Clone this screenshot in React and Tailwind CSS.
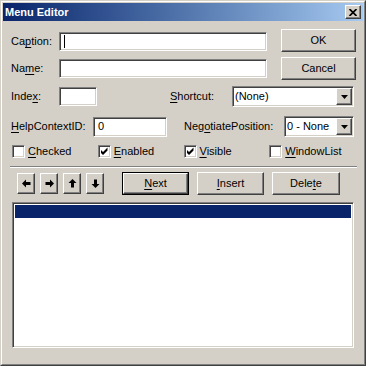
const sunken = 'border border-t-[#808080] border-l-[#808080] border-b-white border-r-white shadow-[inset_1px_1px_0_#404040,inset_-1px_-1px_0_#d4d0c8] bg-white';
const raised = 'border border-t-white border-l-white border-b-[#404040] border-r-[#404040] shadow-[inset_-1px_-1px_0_#808080,inset_1px_1px_0_#d4d0c8] bg-[#d4d0c8]';

function U({ children }) {
  return <span className="underline underline-offset-[2px]">{children}</span>;
}

function Btn({ children, w, def }) {
  const inner = (
    <div className={`${raised} flex items-center justify-center w-full h-full`}>{children}</div>
  );
  if (def) {
    return <div className={`${w} h-[23px] border border-black flex`}>{inner}</div>;
  }
  return <div className={`${w} h-[23px] flex`}>{inner}</div>;
}

function Combo({ w, value }) {
  return (
    <div className={`${sunken} ${w} h-[21px] flex items-center justify-between pl-[2px] pr-[1px]`}>
      <span>{value}</span>
      <div className={`${raised} w-[16px] h-[17px] flex items-center justify-center`}>
        <svg width="7" height="4" viewBox="0 0 7 4">
          <path d="M0 0 H7 L3.5 4 Z" fill="#000" />
        </svg>
      </div>
    </div>
  );
}

function Check({ checked, label }) {
  return (
    <div className="flex items-center w-[87px] h-[13px]">
      <div className={`${sunken} w-[13px] h-[13px] shrink-0 relative`}>
        {checked && (
          <svg className="absolute left-[-1px] top-[-1px]" width="13" height="13" viewBox="0 0 13 13">
            <path d="M3 5 L5 7 L9.5 2.5 L9.5 5.5 L5 10 L3 8 Z" fill="#000" />
          </svg>
        )}
      </div>
      <span className="ml-[3px]">{label}</span>
    </div>
  );
}

function Arrow({ dir }) {
  const rot = { left: 'rotate-0', right: 'rotate-180', up: 'rotate-90', down: '-rotate-90' }[dir];
  return (
    <div className={`${raised} w-[18px] h-[21px] flex items-center justify-center`}>
      <svg className={rot} width="9" height="9" viewBox="0 0 9 9">
        <path d="M0 4.5 L4 0.5 L4 3 L8.5 3 L8.5 6 L4 6 L4 8.5 Z" fill="#000" />
      </svg>
    </div>
  );
}

export default function App() {
  return (
    <div className="w-[366px] h-[366px] bg-[#d4d0c8] border border-t-[#d4d0c8] border-l-[#d4d0c8] border-r-[#404040] border-b-[#404040] font-['Liberation_Sans',Arial,sans-serif] text-[11px] text-black leading-none">
      <div className="w-full h-full border border-t-white border-l-white border-r-[#808080] border-b-[#808080] p-[1px] flex flex-col">
        <div className="h-[18px] bg-gradient-to-r from-[#0a246a] to-[#a6caf0] flex items-center pl-[2px] pr-[2px]">
          <span className="text-white font-bold text-[11px]">Menu Editor</span>
          <div className={`${raised} ml-auto w-[16px] h-[14px] flex items-center justify-center`}>
            <svg width="8" height="7" viewBox="0 0 8 7">
              <path d="M0.5 0 L7.5 7 M7.5 0 L0.5 7" stroke="#000" strokeWidth="1.7" />
            </svg>
          </div>
        </div>

        <div className="flex-1 flex flex-col px-[8px]">
          <div className="mt-[8px] flex items-start">
            <div className="mt-[3px] flex items-center">
              <span className="w-[48px]">Ca<U>p</U>tion:</span>
              <div className={`${sunken} w-[208px] h-[19px] flex items-center pl-[4px]`}>
                <div className="w-[1px] h-[13px] bg-black" />
              </div>
            </div>
            <div className="ml-[14px]">
              <Btn w="w-[75px]">OK</Btn>
            </div>
          </div>

          <div className="mt-[5px] flex items-start">
            <div className="mt-[2px] flex items-center">
              <span className="w-[48px]">Na<U>m</U>e:</span>
              <div className={`${sunken} w-[208px] h-[19px]`} />
            </div>
            <div className="ml-[14px]">
              <Btn w="w-[75px]">Cancel</Btn>
            </div>
          </div>

          <div className="mt-[6px] flex items-center h-[21px]">
            <span className="w-[48px]">Inde<U>x</U>:</span>
            <div className={`${sunken} w-[38px] h-[19px]`} />
            <span className="ml-[73px] w-[62px]"><U>S</U>hortcut:</span>
            <Combo w="w-[122px]" value="(None)" />
          </div>

          <div className="mt-[9px] flex items-center h-[21px]">
            <span className="w-[82px]"><U>H</U>elpContextID:</span>
            <div className={`${sunken} w-[74px] h-[20px] flex items-center pl-[4px]`}>0</div>
            <span className="ml-[17px] w-[100px]">Neg<U>o</U>tiatePosition:</span>
            <Combo w="w-[70px]" value="0 - None" />
          </div>

          <div className="mt-[8px] flex pl-[1px]">
            <Check label={<><U>C</U>hecked</>} />
            <Check checked label={<><U>E</U>nabled</>} />
            <Check checked label={<><U>V</U>isible</>} />
            <Check label={<><U>W</U>indowList</>} />
          </div>

          <div className="mt-[8px] ml-[-1px] w-[347px] h-[2px] border-t border-t-[#808080] border-b border-b-white" />

          <div className="mt-[4px] flex items-start">
            <div className="ml-[6px] mt-[1px] flex gap-[5px]">
              <Arrow dir="left" />
              <Arrow dir="right" />
              <Arrow dir="up" />
              <Arrow dir="down" />
            </div>
            <div className="ml-[18px]">
              <Btn w="w-[67px]" def><U>N</U>ext</Btn>
            </div>
            <div className="ml-[8px]">
              <Btn w="w-[67px]"><U>I</U>nsert</Btn>
            </div>
            <div className="ml-[8px]">
              <Btn w="w-[68px]">Dele<U>t</U>e</Btn>
            </div>
          </div>

          <div className={`${sunken} mt-[7px] ml-[1px] w-[342px] h-[146px] p-[2px]`}>
            <div className="h-[13px] bg-[#0a246a]" />
          </div>
        </div>
      </div>
    </div>
  );
}
